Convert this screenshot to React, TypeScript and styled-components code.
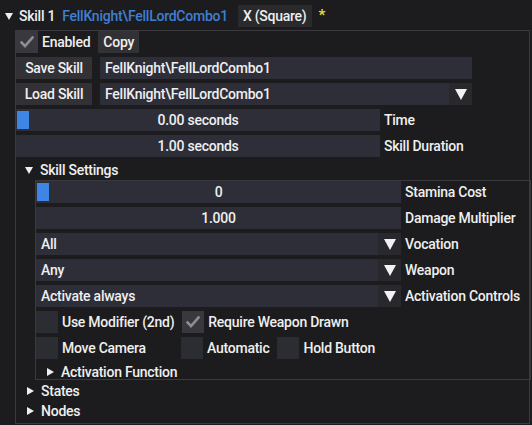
import React from 'react';
import styled, { createGlobalStyle } from 'styled-components';

const GlobalStyle = createGlobalStyle`
  html, body {
    margin: 0;
    padding: 0;
    background: #1c1c1e;
  }
  body {
    font-family: Roboto, "Liberation Sans", sans-serif;
    font-size: 14px;
    font-weight: 500;
    letter-spacing: -0.25px;
    color: #efefef;
  }
`;

const Root = styled.div`
  width: 532px;
  height: 425px;
  overflow: hidden;
  padding-top: 5px;
  box-sizing: border-box;
`;

const HeaderRow = styled.div`
  display: flex;
  align-items: center;
  height: 22px;
  padding-left: 5px;
`;

const Arrow = styled.span<{ $open?: boolean }>`
  display: inline-block;
  width: 0;
  height: 0;
  ${(p) =>
    p.$open
      ? `border-left: 4px solid transparent;
         border-right: 4px solid transparent;
         border-top: 7px solid #efefef;`
      : `border-top: 4px solid transparent;
         border-bottom: 4px solid transparent;
         border-left: 7px solid #efefef;`}
`;

const Title = styled.span`
  margin-left: 6px;
`;

const PathLabel = styled.span`
  margin-left: 7px;
  color: #3f7fd4;
`;

const SmallButton = styled.span`
  margin-left: 10px;
  height: 22px;
  padding: 0 5px;
  display: flex;
  align-items: center;
  background: #2a2a2c;
`;

const Star = styled.span`
  margin-left: 7px;
  color: #e2dc3c;
  font-size: 15px;
  font-weight: 700;
  margin-top: -3px;
`;

const Panel = styled.div<{ $left: number }>`
  margin-left: ${(p) => p.$left}px;
  width: ${(p) => 530 - p.$left}px;
  border: 1px solid #3a3a3e;
  box-sizing: border-box;
  display: flex;
  flex-direction: column;
  gap: 4px;
`;

const OuterPanel = styled(Panel)`
  margin-top: 3px;
  height: 394px;
`;

const InnerPanel = styled(Panel)`
  margin-top: -1px;
  width: 496px;
`;

const TreeGroup = styled.div`
  display: flex;
  flex-direction: column;
  margin-top: -3px;
`;

const Row = styled.div<{ $gap?: number }>`
  display: flex;
  align-items: center;
  height: 22px;
  gap: ${(p) => p.$gap ?? 8}px;
`;

const Pair = styled.div<{ $w?: number }>`
  display: flex;
  align-items: center;
  gap: 4px;
  ${(p) => (p.$w ? `width: ${p.$w}px;` : '')}
`;

const Button = styled.div<{ $w?: number }>`
  height: 22px;
  ${(p) => (p.$w ? `width: ${p.$w}px;` : 'padding: 0 5px;')}
  display: flex;
  align-items: center;
  justify-content: center;
  background: #323236;
  box-sizing: border-box;
`;

const Frame = styled.div<{ $w: number }>`
  position: relative;
  width: ${(p) => p.$w}px;
  height: 22px;
  background: #2e2e39;
  display: flex;
  align-items: center;
  box-sizing: border-box;
`;

const InputText = styled.span`
  padding-left: 5px;
  flex: 1;
  white-space: nowrap;
`;

const ComboArrowBox = styled.div`
  width: 23px;
  height: 22px;
  background: #29292d;
  display: flex;
  align-items: center;
  justify-content: center;
`;

const ComboArrow = styled.span`
  width: 0;
  height: 0;
  border-left: 6px solid transparent;
  border-right: 6px solid transparent;
  border-top: 11px solid #f2f2f2;
`;

const SliderValue = styled.span`
  flex: 1;
  text-align: center;
`;

const Grab = styled.div`
  position: absolute;
  left: 1px;
  top: 2px;
  width: 12px;
  height: 18px;
  background: #3d86e6;
`;

const FieldLabel = styled.span`
  white-space: nowrap;
`;

const Check = styled.div<{ $on?: boolean }>`
  width: 22px;
  height: 22px;
  background: ${(p) => (p.$on ? '#38383e' : '#2c2c33')};
  display: flex;
  align-items: center;
  justify-content: center;
  flex-shrink: 0;
`;

const TreeRow = styled.div<{ $indent: number; $h?: number }>`
  display: flex;
  align-items: center;
  box-sizing: border-box;
  height: ${(p) => p.$h ?? 20}px;
  padding-left: ${(p) => p.$indent}px;
  padding-top: ${(p) => (p.$h ? 2 : 0)}px;
  gap: 7px;
`;

const Checkmark = () => (
  <svg width="14" height="12" viewBox="0 0 14 12">
    <path d="M1.5 6.5 L5 10 L12.5 1.5" stroke="#8d8d92" strokeWidth="2.6" fill="none" strokeLinecap="square" />
  </svg>
);

const CheckBox: React.FC<{ on?: boolean; label: string; w?: number }> = ({ on, label, w }) => (
  <Pair $w={w}>
    <Check $on={on}>{on && <Checkmark />}</Check>
    <span>{label}</span>
  </Pair>
);

const Slider: React.FC<{ w: number; value: string; grab?: boolean; label: string }> = ({ w, value, grab, label }) => (
  <Row $gap={4}>
    <Frame $w={w}>
      {grab && <Grab />}
      <SliderValue>{value}</SliderValue>
    </Frame>
    <FieldLabel>{label}</FieldLabel>
  </Row>
);

const Combo: React.FC<{ w: number; value: string; label?: string }> = ({ w, value, label }) => (
  <Row $gap={4}>
    <Frame $w={w}>
      <InputText>{value}</InputText>
      <ComboArrowBox>
        <ComboArrow />
      </ComboArrowBox>
    </Frame>
    {label && <FieldLabel>{label}</FieldLabel>}
  </Row>
);

export default function App() {
  return (
    <Root>
      <GlobalStyle />
      <HeaderRow>
        <Arrow $open />
        <Title>Skill 1</Title>
        <PathLabel>FellKnight\FellLordCombo1</PathLabel>
        <SmallButton>X (Square)</SmallButton>
        <Star>*</Star>
      </HeaderRow>
      <OuterPanel $left={15}>
        <Row>
          <CheckBox on label="Enabled" />
          <Button>Copy</Button>
        </Row>
        <Row>
          <Button $w={76}>Save Skill</Button>
          <Frame $w={372}>
            <InputText>FellKnight\FellLordCombo1</InputText>
          </Frame>
        </Row>
        <Row>
          <Button $w={76}>Load Skill</Button>
          <Combo w={372} value="FellKnight\FellLordCombo1" />
        </Row>
        <Slider w={364} value="0.00 seconds" grab label="Time" />
        <Slider w={364} value="1.00 seconds" label="Skill Duration" />
        <TreeRow $indent={9} $h={16}>
          <Arrow $open />
          <span>Skill Settings</span>
        </TreeRow>
        <InnerPanel $left={19}>
          <Slider w={365} value="0" grab label="Stamina Cost" />
          <Slider w={365} value="1.000" label="Damage Multiplier" />
          <Combo w={365} value="All" label="Vocation" />
          <Combo w={365} value="Any" label="Weapon" />
          <Combo w={365} value="Activate always" label="Activation Controls" />
          <Row>
            <CheckBox label="Use Modifier (2nd)" />
            <CheckBox on label="Require Weapon Drawn" />
          </Row>
          <Row>
            <CheckBox label="Move Camera" w={137} />
            <CheckBox label="Automatic" />
            <CheckBox label="Hold Button" />
          </Row>
          <TreeRow $indent={11} $h={16}>
            <Arrow />
            <span>Activation Function</span>
          </TreeRow>
        </InnerPanel>
        <TreeGroup>
          <TreeRow $indent={11}>
            <Arrow />
            <span>States</span>
          </TreeRow>
          <TreeRow $indent={11}>
            <Arrow />
            <span>Nodes</span>
          </TreeRow>
        </TreeGroup>
      </OuterPanel>
    </Root>
  );
}
